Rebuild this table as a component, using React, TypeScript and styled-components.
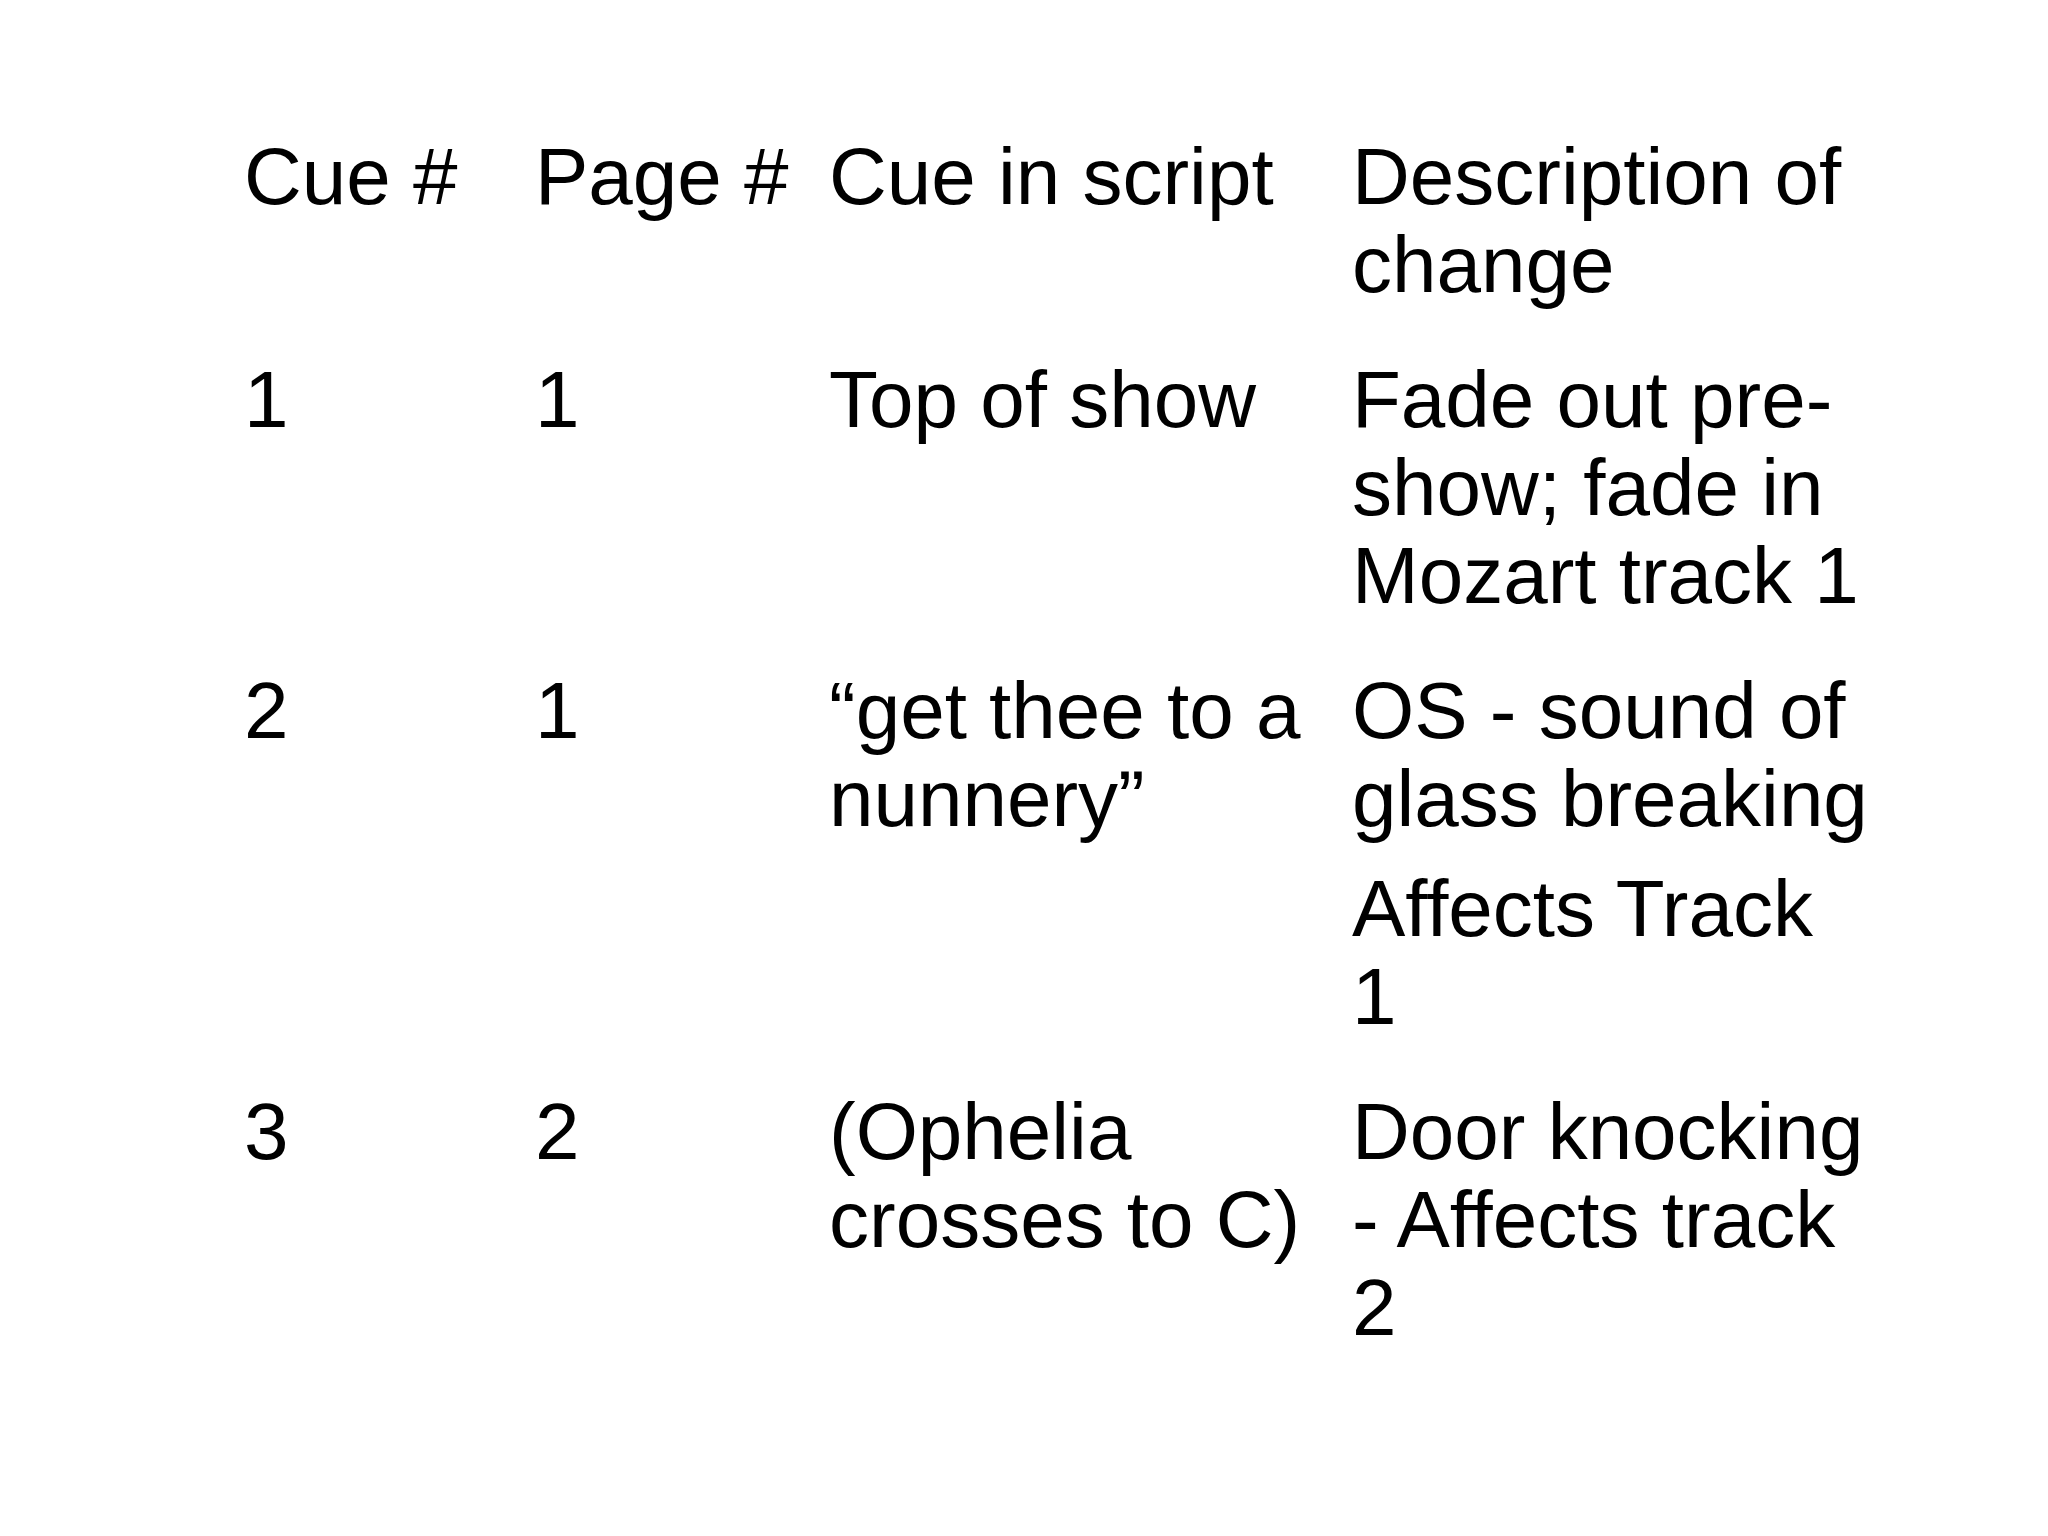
import styled, { createGlobalStyle } from 'styled-components'

const GlobalStyle = createGlobalStyle`
  html, body {
    margin: 0;
    padding: 0;
    background: #ffffff;
  }
  body {
    font-family: "Liberation Sans", Arial, sans-serif;
    color: #000000;
  }
`

const Slide = styled.main`
  width: 2048px;
  height: 1536px;
  box-sizing: border-box;
  padding: 133px 0 0 244px;
  background: #ffffff;
`

const Table = styled.div`
  display: grid;
  grid-template-columns: 291px 294px 523px 522px;
  row-gap: 47px;
  font-size: 80px;
  line-height: 88px;
`

const Cell = styled.div`
  display: flex;
  flex-direction: column;
  gap: 22px;
`

const Para = styled.p`
  margin: 0;
`

type Row = [string, string, string, string[]]

const header: Row = ['Cue #', 'Page #', 'Cue in script', ['Description of change']]

const rows: Row[] = [
  ['1', '1', 'Top of show', ['Fade out pre-show; fade in Mozart track 1']],
  ['2', '1', '\u201cget thee to a nunnery\u201d', ['OS - sound of glass breaking', 'Affects Track 1']],
  ['3', '2', '(Ophelia crosses to C)', ['Door knocking - Affects track 2']],
]

function TableRow({ row }: { row: Row }) {
  const [cue, page, script, desc] = row
  return (
    <>
      <Cell>
        <Para>{cue}</Para>
      </Cell>
      <Cell>
        <Para>{page}</Para>
      </Cell>
      <Cell>
        <Para>{script}</Para>
      </Cell>
      <Cell>
        {desc.map((d) => (
          <Para key={d}>{d}</Para>
        ))}
      </Cell>
    </>
  )
}

export default function App() {
  return (
    <>
      <GlobalStyle />
      <Slide>
        <Table>
          <TableRow row={header} />
          {rows.map((r) => (
            <TableRow key={r[0]} row={r} />
          ))}
        </Table>
      </Slide>
    </>
  )
}
